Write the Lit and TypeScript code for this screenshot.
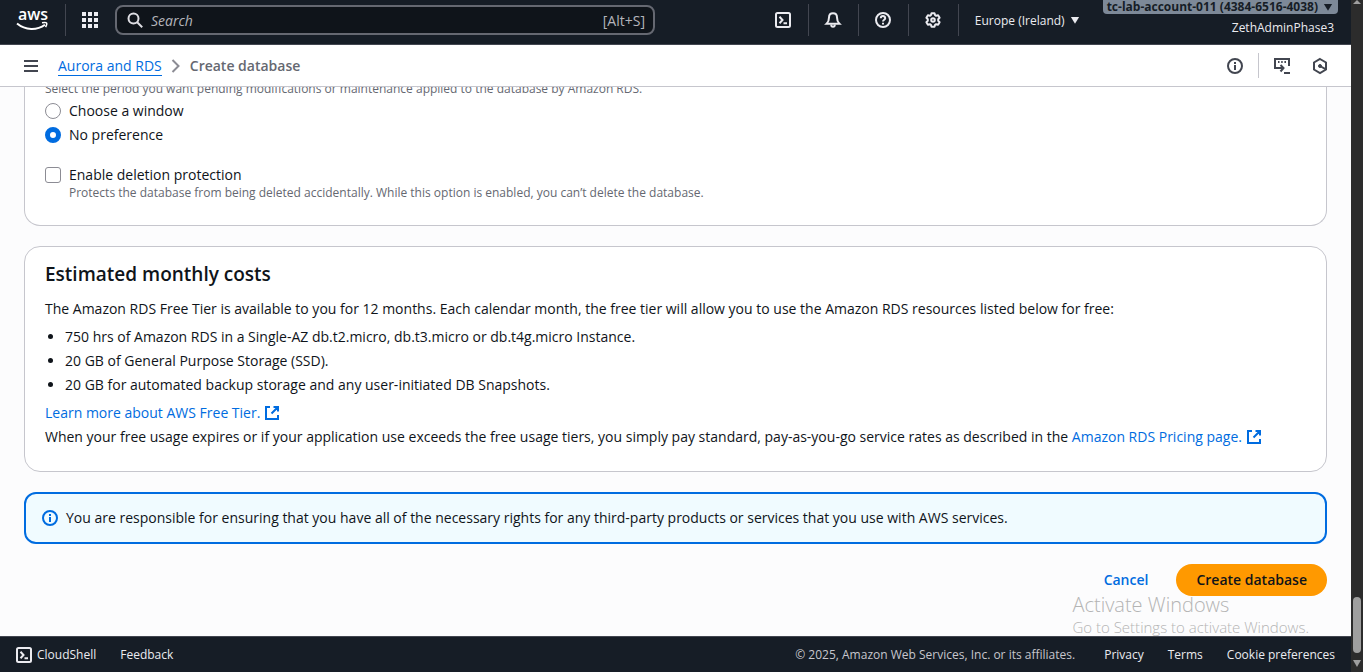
import { LitElement, html, css, svg } from "lit";
import { customElement, property, state } from "lit/decorators.js";

const glyphs: Record<string, unknown> = {
  terminal: svg`<rect x="1" y="1" width="14" height="14" rx="1.5"/><path d="M4.5 4.8 7.5 8l-3 3.2M8.5 11.2H12"/>`,
  bell: svg`<path d="M8 1.2c2.6 0 4 1.9 4 4.3 0 2.900.7 4.700 2.400 6.300H1.600C3.300 10.200 4 8.400 4 5.500c0-2.400 1.400-4.300 4-4.300Z"/><path d="M6.200 12.500c0 3 3.600 3 3.600 0"/>`,
  help: svg`<circle cx="8" cy="8" r="7"/><path d="M5.800 6.300c0-2.900 4.400-2.900 4.400-.1C10.200 7.800 8 7.700 8 9.600M8 10.800v1.700"/>`,
  gear: svg`<path stroke-linejoin="round" d="M6.500 1.200h3l.6 2 1 .6 2-.5 1.500 2.500L13.200 7.300v1.400l1.400 1.500-1.500 2.500-2-.5-1 .6-.6 2h-3l-.6-2-1-.6-2 .5-1.500-2.500 1.400-1.500V7.300L1.400 5.800l1.500-2.500 2 .5 1-.6Z"/><circle cx="8" cy="8" r="1.800"/>`,
  info: svg`<circle cx="8" cy="8" r="7"/><path d="M8 7v5M8 4v2"/>`,
  search: svg`<circle cx="6.500" cy="6.500" r="5"/><path d="m10.200 10.200 5 5"/>`,
  menu: svg`<path d="M1 3h14M1 8h14M1 13h14"/>`,
  chevron: svg`<path d="m4.500 2 6 6-6 6"/>`,
  external: svg`<path d="M6 2H2v12h12v-4M9.500 2H14v4.500M14 2 7.500 8.500"/>`,
  tour: svg`<path d="M5 10H1V1h14v7M1 10V1M4 4h1.500M7.200 4h1.500M10.400 4H12M5 10h4M6.500 7l3 3-3 3.500M10 15h6"/>`,
  hexagon: svg`<path d="m8 1 6 3.500v7L8 15l-6-3.500v-7Z"/><circle cx="8" cy="8" r="1.500" fill="currentColor" stroke-width="1"/><path d="m8 8 5.500 3.200"/>`,
  grid: svg`<path stroke="none" fill="currentColor" d="M0 0h4v4H0zM6 0h4v4H6zM12 0h4v4h-4zM0 6h4v4H0zM6 6h4v4H6zM12 6h4v4h-4zM0 12h4v4H0zM6 12h4v4H6zM12 12h4v4h-4z"/>`,
  caret: svg`<path stroke="none" fill="currentColor" d="M2.500 4h11L8 13Z"/>`,
};

@customElement("ui-icon")
class UiIcon extends LitElement {
  @property() name = "";
  static styles = css`
    :host { display: inline-flex; width: 16px; height: 16px; flex: none; }
    svg { width: 100%; height: 100%; fill: none; stroke: currentColor; stroke-width: 2; overflow: visible; }
  `;
  render() {
    return html`<svg viewBox="0 0 16 16" aria-hidden="true">${glyphs[this.name]}</svg>`;
  }
}

@customElement("console-header")
class ConsoleHeader extends LitElement {
  static styles = css`
    :host {
      display: flex; align-items: flex-start; height: 44px; flex: none;
      background: #161d26; border-bottom: 1px solid #424650; color: #ebebf0;
      font-size: 12px; font-weight: 500;
    }
    button { font: inherit; color: inherit; background: none; border: 0; padding: 0; cursor: pointer; }
    .logo { display: flex; align-items: center; height: 32px; width: 66px; margin-top: 4px; padding-left: 16px; box-sizing: border-box; border-right: 1px solid #424650; flex: none; }
    .logo svg { width: 34px; height: 24px; overflow: visible; }
    .apps { width: 49px; height: 40px; padding-right: 1px; display: flex; align-items: center; justify-content: center; flex: none; }
    .search {
      flex: 0 1 540px; min-width: 0; box-sizing: border-box; height: 30px; margin-top: 5px; padding: 0 8px 0 10px;
      display: flex; align-items: center; gap: 8px;
      background: #0f141a; border: 2px solid #656871; border-radius: 8px; color: #b4b4bb; font-size: 14px; font-weight: 400;
    }
    .search ui-icon { color: #dedee3; }
    .search input { flex: 1; min-width: 0; background: none; border: 0; outline: 0; padding: 0; font: inherit; color: inherit; }
    .search input::placeholder { color: #b4b4bb; font-style: italic; opacity: 1; }
    .tools { display: flex; margin-left: auto; }
    .tool { width: 50px; height: 32px; margin-top: 4px; border-right: 1px solid #424650; display: flex; align-items: center; justify-content: center; }
    .region { display: flex; align-items: center; gap: 4px; height: 40px; padding: 0 16px; white-space: nowrap; }
    .region ui-icon, .account ui-icon { width: 12px; height: 12px; }
    .who { display: flex; flex-direction: column; align-items: flex-end; gap: 5px; padding: 0 13px 0 6px; white-space: nowrap; }
    .account { display: flex; align-items: center; gap: 4px; height: 14px; line-height: 14px; padding: 0 4px; box-sizing: border-box; background: #7d8998; color: #161d26; border-radius: 0 0 4px 4px; font-weight: 700; }
    .user { padding: 0 4px; line-height: 18px; }
  `;
  render() {
    return html`
      <a class="logo" href="#" aria-label="AWS home">
        <svg viewBox="0 0 34 24">
          <text x="2" y="12" font-family="Open Sans, sans-serif" font-size="16" font-weight="600" fill="#fff">aws</text>
          <path d="M1 15.500c8.500 7 20 7 28 1.200" fill="none" stroke="#fff" stroke-width="2"/>
          <path d="M26 14.800c5-.8 6-.3 3.600 4.400" fill="none" stroke="#fff" stroke-width="1.500"/>
        </svg>
      </a>
      <button class="apps" aria-label="Services"><ui-icon name="grid"></ui-icon></button>
      <label class="search">
        <ui-icon name="search"></ui-icon>
        <input type="text" placeholder="Search" aria-label="Search" />
        <span>[Alt+S]</span>
      </label>
      <div class="tools">
        ${[["terminal", "CloudShell"], ["bell", "Notifications"], ["help", "Support"], ["gear", "Settings"]].map(
          ([icon, label]) => html`<button class="tool" aria-label=${label}><ui-icon name=${icon}></ui-icon></button>`
        )}
        <button class="region">Europe (Ireland)<ui-icon name="caret"></ui-icon></button>
        <div class="who">
          <button class="account">tc-lab-account-011 (4384-6516-4038)<ui-icon name="caret"></ui-icon></button>
          <span class="user">ZethAdminPhase3</span>
        </div>
      </div>
    `;
  }
}

@customElement("crumb-bar")
class CrumbBar extends LitElement {
  static styles = css`
    :host { display: flex; align-items: center; height: 41px; flex: none; padding: 0 23px; background: #fff; border-bottom: 1px solid #c6c6cd; color: #424650; font-size: 14px; }
    button { display: flex; color: inherit; background: none; border: 0; padding: 0; cursor: pointer; }
    nav { display: flex; align-items: center; gap: 6px; margin-left: 19px; }
    a { color: #006ce0; text-decoration: none; border-bottom: 1px solid #006ce0; line-height: 19px; }
    .sep { color: #8c8c94; }
    .current { font-weight: 600; color: #656871; }
    .actions { display: flex; align-items: center; margin-left: auto; }
    .split { width: 1px; height: 25px; background: #c6c6cd; margin: 0 15px; }
    .last { margin-left: 22px; }
  `;
  render() {
    return html`
      <button aria-label="Open navigation"><ui-icon name="menu"></ui-icon></button>
      <nav aria-label="Breadcrumbs">
        <a href="#">Aurora and RDS</a>
        <ui-icon class="sep" name="chevron"></ui-icon>
        <span class="current">Create database</span>
      </nav>
      <div class="actions">
        <button aria-label="Info"><ui-icon name="info"></ui-icon></button>
        <span class="split"></span>
        <button aria-label="Tutorials"><ui-icon name="tour"></ui-icon></button>
        <button class="last" aria-label="Assistant"><ui-icon name="hexagon"></ui-icon></button>
      </div>
    `;
  }
}

@customElement("create-form")
class CreateForm extends LitElement {
  @state() private period = "No preference";
  static styles = css`
    :host {
      flex: 1; min-height: 0; overflow: hidden; box-sizing: border-box; padding: 0 24px 40px;
      display: flex; flex-direction: column; justify-content: flex-end; gap: 20px; background: #fcfcfd;
    }
    section, .alert, .buttons { flex: none; }
    .card { background: #fff; border: 1px solid #c6c6cd; border-radius: 16px; padding: 15px 20px 22px; }
    .maintenance { border-top: 0; border-radius: 0 0 16px 16px; padding: 0 20px 24px; }
    .hint { color: #656871; font-size: 12px; line-height: 16px; }
    fieldset { border: 0; margin: 0 0 20px; padding: 4px 0 0; display: grid; gap: 4px; }
    .option { display: flex; align-items: center; gap: 8px; line-height: 20px; }
    .option + .hint { padding-left: 24px; }
    .option input { appearance: none; box-sizing: border-box; width: 16px; height: 16px; margin: 0; border: 1px solid #8c8c94; background: #fff; flex: none; }
    .option input[type="radio"] { border-radius: 50%; }
    .option input[type="checkbox"] { border-radius: 3px; }
    .option input:checked { border: 5px solid #006ce0; }
    h2 { margin: 0 0 11px; font-size: 19px; line-height: 24px; font-weight: 600; }
    p { margin: 0; line-height: 24px; }
    ul { margin: 4px 0; padding-left: 20px; line-height: 24px; }
    a { color: #006ce0; text-decoration: none; }
    a ui-icon { margin-left: 4px; vertical-align: -3px; }
    .alert { display: flex; align-items: center; gap: 8px; padding: 14px 16px; border: 2px solid #006ce0; border-radius: 12px; background: #f0fbff; line-height: 20px; }
    .alert ui-icon { color: #006ce0; }
    .buttons { display: flex; justify-content: flex-end; gap: 8px; }
    button { font: inherit; font-weight: 600; line-height: 20px; padding: 6px 20px; border: 0; border-radius: 16px; cursor: pointer; }
    .cancel { background: none; color: #006ce0; }
    .primary { background: #ff9900; color: #0f141a; }
  `;
  render() {
    return html`
      <section class="card maintenance">
        <div class="hint" id="period-hint">Select the period you want pending modifications or maintenance applied to the database by Amazon RDS.</div>
        <fieldset aria-labelledby="period-hint">
          ${["Choose a window", "No preference"].map(
            (o) => html`<label class="option">
              <input type="radio" name="period" .checked=${this.period === o} @change=${() => (this.period = o)} />${o}
            </label>`
          )}
        </fieldset>
        <label class="option"><input type="checkbox" aria-describedby="protect-hint" />Enable deletion protection</label>
        <div class="hint" id="protect-hint">Protects the database from being deleted accidentally. While this option is enabled, you can’t delete the database.</div>
      </section>
      <section class="card">
        <h2>Estimated monthly costs</h2>
        <p>The Amazon RDS Free Tier is available to you for 12 months. Each calendar month, the free tier will allow you to use the Amazon RDS resources listed below for free:</p>
        <ul>
          <li>750 hrs of Amazon RDS in a Single-AZ db.t2.micro, db.t3.micro or db.t4g.micro Instance.</li>
          <li>20 GB of General Purpose Storage (SSD).</li>
          <li>20 GB for automated backup storage and any user-initiated DB Snapshots.</li>
        </ul>
        <p><a href="#">Learn more about AWS Free Tier.<ui-icon name="external"></ui-icon></a></p>
        <p>When your free usage expires or if your application use exceeds the free usage tiers, you simply pay standard, pay-as-you-go service rates as described in the <a href="#">Amazon RDS Pricing page.<ui-icon name="external"></ui-icon></a></p>
      </section>
      <div class="alert"><ui-icon name="info"></ui-icon><span>You are responsible for ensuring that you have all of the necessary rights for any third-party products or services that you use with AWS services.</span></div>
      <div class="buttons">
        <button class="cancel">Cancel</button>
        <button class="primary">Create database</button>
      </div>
    `;
  }
}

@customElement("console-footer")
class ConsoleFooter extends LitElement {
  static styles = css`
    :host { display: flex; align-items: center; gap: 24px; height: 35px; flex: none; padding: 0 16px; background: #161d26; border-top: 1px solid #424650; color: #ebebf0; font-size: 12px; font-weight: 500; white-space: nowrap; }
    button, a { font: inherit; color: inherit; background: none; border: 0; padding: 0; text-decoration: none; display: flex; align-items: center; gap: 5px; }
    .copy { margin-left: auto; color: #c6c6cd; font-weight: 400; margin-right: 5px; }
  `;
  render() {
    return html`
      <button><ui-icon name="terminal"></ui-icon>CloudShell</button>
      <a href="#">Feedback</a>
      <span class="copy">© 2025, Amazon Web Services, Inc. or its affiliates.</span>
      <a href="#">Privacy</a>
      <a href="#">Terms</a>
      <a href="#">Cookie preferences</a>
    `;
  }
}

@customElement("app-root")
class AppRoot extends LitElement {
  static styles = css`
    :host { position: relative; display: flex; height: 100vh; overflow: hidden; font-family: "Open Sans", "Noto Sans", sans-serif; font-size: 14px; color: #0f141a; }
    .page { flex: 1; min-width: 0; display: flex; flex-direction: column; }
    .scroll { flex: none; width: 12px; background: #2c2c2c; display: flex; flex-direction: column; align-items: center; justify-content: space-between; box-sizing: border-box; padding-bottom: 5px; }
    .up, .down { width: 0; border: 4px solid transparent; }
    .up { border-top: 0; border-bottom: 4px solid #9f9f9f; }
    .down { border-bottom: 0; border-top: 7px solid #9f9f9f; }
    .end { display: flex; flex-direction: column; align-items: center; gap: 7px; }
    .thumb { width: 8px; height: 56px; border-radius: 4px; background: #9f9f9f; }
    .watermark { position: absolute; right: 54px; bottom: 36px; color: #b4b4b4; font-family: "Open Sans", sans-serif; font-weight: 300; font-size: 15px; line-height: 18px; pointer-events: none; }
    .watermark strong { display: block; font-weight: 300; font-size: 20px; line-height: 26px; }
  `;
  render() {
    return html`
      <div class="page">
        <console-header></console-header>
        <crumb-bar></crumb-bar>
        <create-form></create-form>
        <console-footer></console-footer>
      </div>
      <div class="scroll" aria-hidden="true">
        <span class="up"></span>
        <div class="end"><span class="thumb"></span><span class="down"></span></div>
      </div>
      <div class="watermark"><strong>Activate Windows</strong>Go to Settings to activate Windows.</div>
    `;
  }
}
